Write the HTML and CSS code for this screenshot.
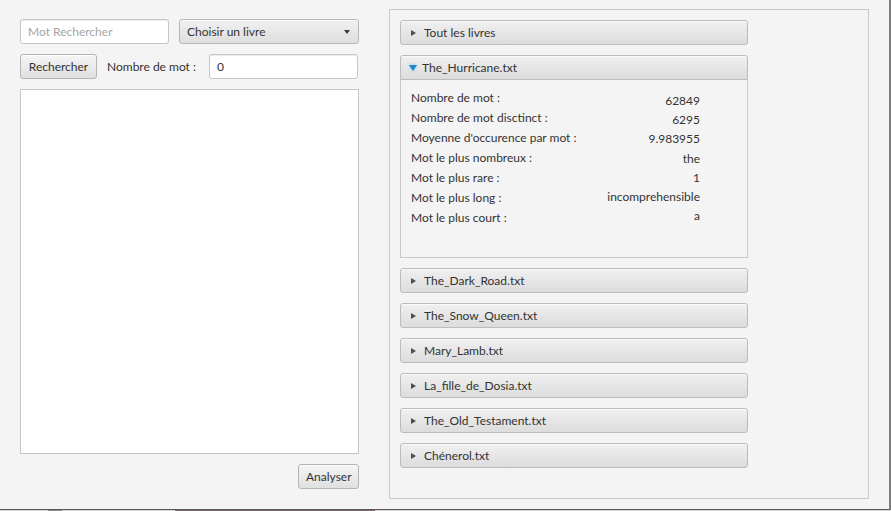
FILE: index.html
```html
<!DOCTYPE html>
<html lang="fr">
<head>
<meta charset="utf-8">
<title>Analyse de livres</title>
<link rel="stylesheet" href="styles.css">
</head>
<body>
<div class="window">
  <div class="left">
    <div class="row">
      <input class="field search" type="text" placeholder="Mot Rechercher">
      <div class="combo"><span>Choisir un livre</span><span class="caret"></span></div>
    </div>
    <div class="row">
      <button class="btn">Rechercher</button>
      <span class="lbl">Nombre de mot :</span>
      <input class="field count" type="text" value="0">
    </div>
    <div class="list"></div>
    <div class="actions"><button class="btn">Analyser</button></div>
  </div>
  <div class="right">
    <div class="pane"><div class="head"><span class="arrow"></span>Tout les livres</div></div>
    <div class="pane open">
      <div class="head"><span class="arrow down"></span>The_Hurricane.txt</div>
      <div class="content">
        <div class="col labels">
          <div>Nombre de mot :</div>
          <div>Nombre de mot disctinct :</div>
          <div>Moyenne d'occurence par mot :</div>
          <div>Mot le plus nombreux :</div>
          <div>Mot le plus rare :</div>
          <div>Mot le plus long :</div>
          <div>Mot le plus court :</div>
        </div>
        <div class="col values">
          <div>62849</div>
          <div>6295</div>
          <div>9.983955</div>
          <div>the</div>
          <div>1</div>
          <div>incomprehensible</div>
          <div>a</div>
        </div>
      </div>
    </div>
    <div class="pane"><div class="head"><span class="arrow"></span>The_Dark_Road.txt</div></div>
    <div class="pane"><div class="head"><span class="arrow"></span>The_Snow_Queen.txt</div></div>
    <div class="pane"><div class="head"><span class="arrow"></span>Mary_Lamb.txt</div></div>
    <div class="pane"><div class="head"><span class="arrow"></span>La_fille_de_Dosia.txt</div></div>
    <div class="pane"><div class="head"><span class="arrow"></span>The_Old_Testament.txt</div></div>
    <div class="pane"><div class="head"><span class="arrow"></span>Chénerol.txt</div></div>
  </div>
</div>
<div class="strip"></div>
</body>
</html>
```

FILE: styles.css
```css
html, body {
  margin: 0;
  padding: 0;
  background: #f4f4f4;
}
body {
  width: 891px;
  height: 511px;
  overflow: hidden;
  font-family: Lato, "Open Sans", sans-serif;
  font-size: 12px;
  color: #333333;
}
.window {
  width: 889px;
  height: 509px;
  display: flex;
  align-items: flex-start;
  background: #f4f4f4;
  border-right: 2px solid #7d7d7d;
  border-bottom: 1px solid #5a5a5a;
}
.strip {
  height: 1px;
  background: linear-gradient(90deg, #d8d8d8 0, #d8d8d8 48px, #8a8a8a 48px, #8a8a8a 62px, #d8d8d8 62px, #d8d8d8 175px, #7a6a6a 175px, #7a6a6a 375px, #d8d8d8 375px);
}
.left {
  width: 339px;
  padding: 19px 0 0 20px;
  display: flex;
  flex-direction: column;
  gap: 10px;
}
.row {
  display: flex;
  align-items: center;
  height: 25px;
  gap: 10px;
}
.field {
  box-sizing: border-box;
  height: 25px;
  margin: 0;
  border: 1px solid #c6c6c6;
  border-radius: 3px;
  background: #ffffff;
  box-shadow: inset 0 1px 1px #ececec;
  padding: 0 7px;
  font: inherit;
  color: #333333;
  outline: none;
}
.field::placeholder {
  color: #a6a6a6;
}
.search { width: 149px; }
.count { width: 149px; }
.combo {
  box-sizing: border-box;
  width: 180px;
  height: 25px;
  border: 1px solid #b7b7b7;
  border-radius: 3px;
  background: linear-gradient(#f1f1f1, #dedede);
  box-shadow: inset 0 1px 0 #fbfbfb;
  display: flex;
  align-items: center;
  justify-content: space-between;
  padding: 0 7px 0 7px;
}
.caret {
  width: 0;
  height: 0;
  border-left: 3.5px solid transparent;
  border-right: 3.5px solid transparent;
  border-top: 4px solid #3a3a3a;
  margin-right: 1px;
  margin-top: 1px;
}
.btn {
  box-sizing: border-box;
  height: 25px;
  margin: 0;
  border: 1px solid #b5b5b5;
  border-radius: 3px;
  background: linear-gradient(#f5f5f5, #e0e0e0);
  box-shadow: inset 0 1px 0 #fdfdfd;
  font: inherit;
  color: #333333;
  padding: 0 7px;
}
.row .btn { width: 77px; }
.lbl { white-space: nowrap; width: 92px; }
.list {
  box-sizing: border-box;
  height: 365px;
  border: 1px solid #c6c6c6;
  background: #ffffff;
}
.actions {
  display: flex;
  justify-content: flex-end;
}
.actions .btn { width: 61px; }

.right {
  box-sizing: border-box;
  width: 480px;
  height: 490px;
  margin: 9px 0 0 30px;
  border: 1px solid #c8c8c8;
  padding: 10px;
  display: flex;
  flex-direction: column;
  gap: 10px;
}
.pane { width: 348px; }
.head {
  box-sizing: border-box;
  height: 25px;
  border: 1px solid #bcbcbc;
  border-radius: 3px;
  background: linear-gradient(#f0f0f0, #dcdcdc);
  box-shadow: inset 0 1px 0 #fafafa;
  display: flex;
  align-items: center;
  padding-left: 9px;
  color: #333333;
}
.open .head {
  border-radius: 3px 3px 0 0;
}
.arrow {
  width: 0;
  height: 0;
  border-top: 3.5px solid transparent;
  border-bottom: 3.5px solid transparent;
  border-left: 5px solid #4d4d4d;
  margin-right: 8px;
  margin-left: 1px;
}
.arrow.down {
  border-top: 6px solid #1f86c8;
  border-left: 4.5px solid transparent;
  border-right: 4.5px solid transparent;
  border-bottom: 0;
  margin-left: -1px;
  margin-right: 5px;
  filter: drop-shadow(0 0 1.5px #7fd0f5);
}
.content {
  box-sizing: border-box;
  height: 178px;
  border: 1px solid #c8c8c8;
  border-top: none;
  background: #f4f4f4;
  display: flex;
  padding: 8px 0 0 10px;
}
.col div { white-space: nowrap; }
.labels { width: 180px; }
.labels div { height: 20px; line-height: 20px; }
.values {
  width: 109px;
  text-align: right;
  padding-top: 3px;
}
.values div { height: 19.2px; line-height: 19.2px; }
```
